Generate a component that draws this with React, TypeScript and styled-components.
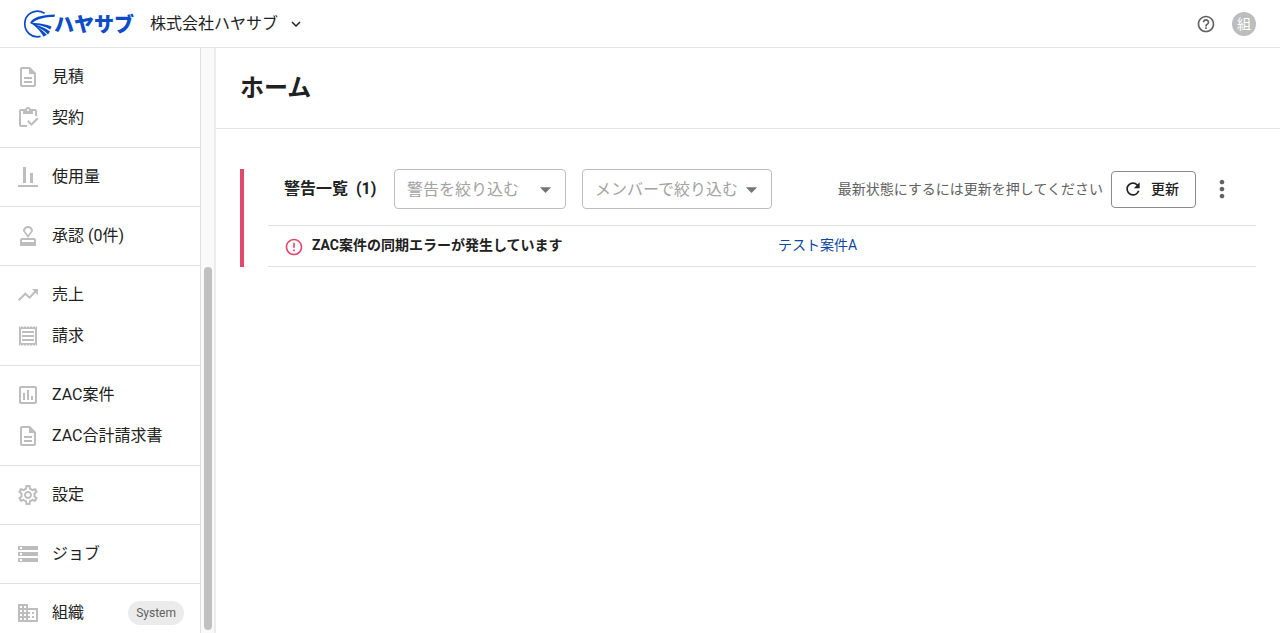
import React from 'react';
import styled, { createGlobalStyle } from 'styled-components';
import {
  MdAlignVerticalBottom,
  MdArrowDropDown,
  MdErrorOutline,
  MdHelpOutline,
  MdKeyboardArrowDown,
  MdMoreVert,
  MdOutlineApproval,
  MdOutlineAssessment,
  MdOutlineBusiness,
  MdOutlineDescription,
  MdOutlineInventory,
  MdOutlineReceipt,
  MdOutlineSettings,
  MdRefresh,
  MdStorage,
  MdTrendingUp,
} from 'react-icons/md';
import type { IconType } from 'react-icons';

const GlobalStyle = createGlobalStyle`
  *, *::before, *::after { box-sizing: border-box; }
  body {
    margin: 0;
    background: #fff;
    color: #212121;
    font-family: Roboto, "Noto Sans CJK JP", sans-serif;
    font-size: 16px;
    line-height: 24px;
  }
  button, select { font: inherit; color: inherit; }
`;

const Shell = styled.div`
  display: flex;
  flex-direction: column;
  height: 100vh;
`;

const Header = styled.header`
  display: flex;
  align-items: center;
  flex: none;
  height: 48px;
  padding: 0 24px 0 23px;
  border-bottom: 1px solid #e4e4e4;
`;

const Logo = styled.a`
  display: flex;
  align-items: center;
  width: 112px;
  color: #0b4cc8;
  text-decoration: none;
  white-space: nowrap;
`;

const LogoText = styled.span`
  margin-left: -2px;
  font-family: "Noto Sans CJK JP", sans-serif;
  font-size: 20px;
  font-weight: 900;
`;

const OrgButton = styled.button`
  display: flex;
  align-items: center;
  gap: 9px;
  margin-left: 15px;
  padding: 0;
  border: 0;
  background: none;
`;

const HeaderActions = styled.div`
  display: flex;
  align-items: center;
  gap: 16px;
  margin-left: auto;
`;

const IconButton = styled.button<{ $width: number }>`
  display: flex;
  align-items: center;
  justify-content: center;
  width: ${(p) => p.$width}px;
  padding: 0;
  border: 0;
  background: none;
  color: #616161;
`;

const Avatar = styled.button`
  width: 24px;
  height: 24px;
  padding: 0;
  border: 0;
  border-radius: 50%;
  background: #bdbdbd;
  color: #fff;
  font-size: 14px;
  line-height: 24px;
`;

const Body = styled.div`
  display: flex;
  flex: 1;
  min-height: 0;
`;

const Nav = styled.nav`
  flex: none;
  width: 201px;
  border-right: 1px solid #e0e0e0;
  overflow: hidden;
`;

const NavGroup = styled.ul`
  margin: 0;
  padding: 8px 0 9px;
  list-style: none;
  & + & { border-top: 1px solid #e0e0e0; }
`;

const NavLink = styled.a`
  display: flex;
  align-items: center;
  gap: 12px;
  height: 41px;
  padding: 0 16px;
  color: #212121;
  text-decoration: none;
  svg { flex: none; color: #bdbdbd; }
`;

const Chip = styled.span`
  margin-left: auto;
  padding: 0 8px;
  border-radius: 12px;
  background: #ebebeb;
  color: #616161;
  font-size: 12px;
`;

const ScrollTrack = styled.div`
  display: flex;
  flex-direction: column;
  flex: none;
  width: 15px;
  padding: 0 4px 3px 3px;
  border-right: 2px solid #ececec;
  background: #fafafa;
`;

const ScrollOffset = styled.div`
  flex: 219;
`;

const ScrollThumb = styled.div`
  flex: 363;
  width: 8px;
  border-radius: 4px;
  background: #c1c1c1;
`;

const Main = styled.main`
  flex: 1;
  min-width: 0;
`;

const PageHead = styled.div`
  padding: 22px 24px;
  border-bottom: 1px solid #e4e4e4;
`;

const PageTitle = styled.h1`
  margin: 0;
  font-size: 24px;
  font-weight: 700;
  line-height: 36px;
`;

const AlertPanel = styled.section`
  margin: 40px 24px;
  padding-left: 24px;
  border-left: 4px solid #e2486c;
`;

const Toolbar = styled.div`
  display: flex;
  align-items: center;
  gap: 16px;
  padding: 0 16px 16px;
`;

const PanelTitle = styled.h2`
  display: flex;
  gap: 8px;
  min-width: 94px;
  margin: 0;
  font-size: 16px;
  font-weight: 700;
  white-space: nowrap;
`;

const SelectBox = styled.div<{ $width: number }>`
  position: relative;
  width: ${(p) => p.$width}px;
  svg {
    position: absolute;
    top: 7px;
    right: 7px;
    color: #757575;
    pointer-events: none;
  }
`;

const Select = styled.select`
  display: block;
  width: 100%;
  height: 40px;
  padding: 1px 0 0 12px;
  border: 1px solid #bdbdbd;
  border-radius: 4px;
  background: none;
  color: #a3a3a3;
  appearance: none;
`;

const ToolbarEnd = styled.div`
  display: flex;
  align-items: center;
  gap: 8px;
  margin-left: auto;
`;

const Hint = styled.span`
  color: #616161;
  font-size: 14px;
  white-space: nowrap;
`;

const RefreshButton = styled.button`
  display: flex;
  align-items: center;
  gap: 8px;
  height: 37px;
  padding: 0 16px 0 11px;
  border: 1px solid #8a8a8a;
  border-radius: 4px;
  background: none;
  font-size: 14px;
  font-weight: 500;
  white-space: nowrap;
`;

const AlertTable = styled.table`
  width: 100%;
  table-layout: fixed;
  border-spacing: 0;
  border-top: 1px solid #e0e0e0;
  font-size: 14px;
`;

const Cell = styled.td`
  height: 41px;
  padding: 0 16px 2px;
  border-bottom: 1px solid #e0e0e0;
`;

const AlertMessage = styled.div`
  display: flex;
  align-items: center;
  gap: 8px;
  font-weight: 700;
  svg { flex: none; color: #e2486c; margin-top: 3px; }
`;

const ProjectLink = styled.a`
  color: #0d479f;
  text-decoration: none;
`;

const LogoMark = () => (
  <svg width="33" height="30" viewBox="0 0 33 30" aria-hidden="true">
    <path
      d="M21.6 4.2C12 -1 2 5 1.8 14.6C1.7 23 9 29.6 17.6 27.4"
      fill="none"
      stroke="currentColor"
      strokeWidth="1.7"
    />
    <path
      d="M7 14C10 8.6 17 6 32 5.6L31.4 8C22 8 14 10 9.4 13.8C16 14.6 23.4 15 28.6 17.6L27.2 20.4C22.5 17.8 17 16.4 13 15.8C17.5 17.2 23 19.4 27 22.6L25 25.4C21.5 21.6 17 19 13.4 17.4C17 19.6 21 22.2 23.8 25.8L20.6 27.8C17.6 22.6 13.4 17.2 7 14Z"
      fill="currentColor"
    />
  </svg>
);

type NavEntry = { label: string; icon: IconType; chip?: string };

const navGroups: NavEntry[][] = [
  [
    { label: '見積', icon: MdOutlineDescription },
    { label: '契約', icon: MdOutlineInventory },
  ],
  [{ label: '使用量', icon: MdAlignVerticalBottom }],
  [{ label: '承認 (0件)', icon: MdOutlineApproval }],
  [
    { label: '売上', icon: MdTrendingUp },
    { label: '請求', icon: MdOutlineReceipt },
  ],
  [
    { label: 'ZAC案件', icon: MdOutlineAssessment },
    { label: 'ZAC合計請求書', icon: MdOutlineDescription },
  ],
  [{ label: '設定', icon: MdOutlineSettings }],
  [{ label: 'ジョブ', icon: MdStorage }],
  [{ label: '組織', icon: MdOutlineBusiness, chip: 'System' }],
];

const FilterSelect = ({ label, width }: { label: string; width: number }) => (
  <SelectBox $width={width}>
    <Select aria-label={label}>
      <option>{label}</option>
    </Select>
    <MdArrowDropDown size={27} />
  </SelectBox>
);

export default function App() {
  return (
    <>
      <GlobalStyle />
      <Shell>
        <Header>
          <Logo href="#">
            <LogoMark />
            <LogoText>ハヤサブ</LogoText>
          </Logo>
          <OrgButton type="button">
            株式会社ハヤサブ
            <MdKeyboardArrowDown size={18} />
          </OrgButton>
          <HeaderActions>
            <IconButton type="button" $width={20} aria-label="ヘルプ">
              <MdHelpOutline size={20} />
            </IconButton>
            <Avatar type="button">組</Avatar>
          </HeaderActions>
        </Header>
        <Body>
          <Nav>
            {navGroups.map((group) => (
              <NavGroup key={group[0].label}>
                {group.map(({ label, icon: Icon, chip }) => (
                  <li key={label}>
                    <NavLink href="#">
                      <Icon size={24} />
                      {label}
                      {chip && <Chip>{chip}</Chip>}
                    </NavLink>
                  </li>
                ))}
              </NavGroup>
            ))}
          </Nav>
          <ScrollTrack>
            <ScrollOffset />
            <ScrollThumb />
          </ScrollTrack>
          <Main>
            <PageHead>
              <PageTitle>ホーム</PageTitle>
            </PageHead>
            <AlertPanel>
              <Toolbar>
                <PanelTitle>
                  <span>警告一覧</span>
                  <span>(1)</span>
                </PanelTitle>
                <FilterSelect label="警告を絞り込む" width={172} />
                <FilterSelect label="メンバーで絞り込む" width={190} />
                <ToolbarEnd>
                  <Hint>最新状態にするには更新を押してください</Hint>
                  <RefreshButton type="button">
                    <MdRefresh size={20} />
                    更新
                  </RefreshButton>
                  <IconButton type="button" $width={36} aria-label="メニュー">
                    <MdMoreVert size={28} />
                  </IconButton>
                </ToolbarEnd>
              </Toolbar>
              <AlertTable>
                <tbody>
                  <tr>
                    <Cell>
                      <AlertMessage>
                        <MdErrorOutline size={20} />
                        ZAC案件の同期エラーが発生しています
                      </AlertMessage>
                    </Cell>
                    <Cell>
                      <ProjectLink href="#">テスト案件A</ProjectLink>
                    </Cell>
                  </tr>
                </tbody>
              </AlertTable>
            </AlertPanel>
          </Main>
        </Body>
      </Shell>
    </>
  );
}
